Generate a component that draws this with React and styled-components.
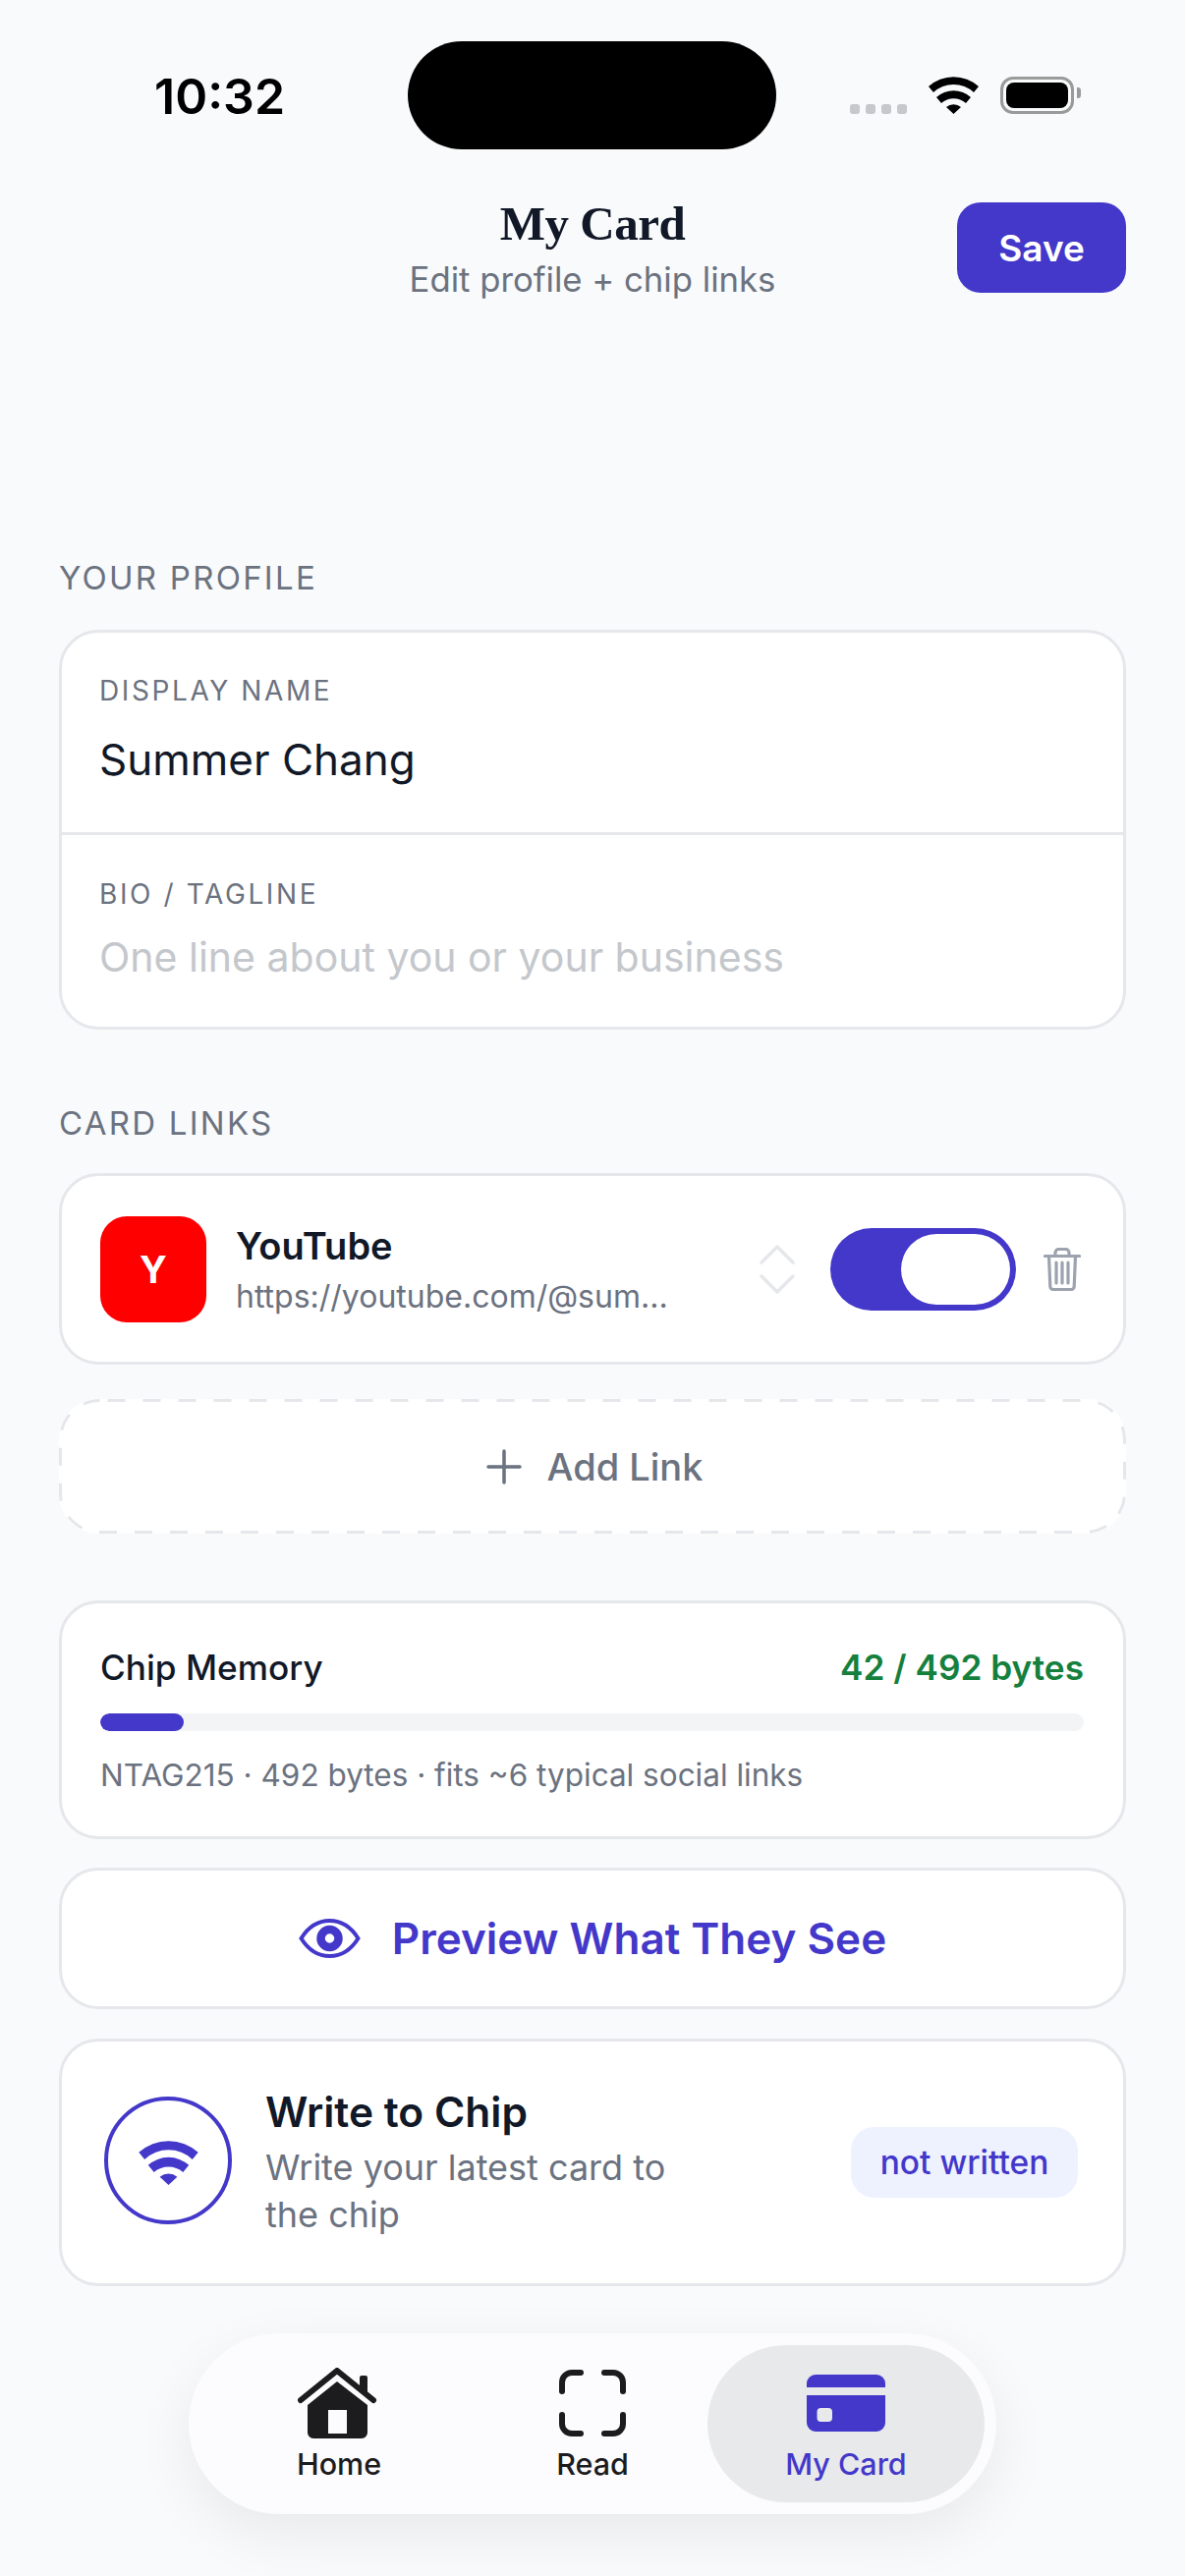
import styled, { createGlobalStyle } from "styled-components";

const PURPLE = "#4338ca";

const GlobalStyle = createGlobalStyle`
  html, body {
    margin: 0;
    padding: 0;
    background: #f9fafb;
  }
  * {
    box-sizing: border-box;
  }
`;

const WifiIcon = ({ width, height, color }) => (
  <svg width={width} height={height} viewBox="0 0 51 38" fill={color}>
    <path d="M0 10A38 38 0 0 1 51 10L46 16A30 30 0 0 0 5 16Z" />
    <path d="M8 21A26 26 0 0 1 43 21L38 27A19 19 0 0 0 13 27Z" />
    <path d="M18 31A12 12 0 0 1 33 31L25.500 38Z" />
  </svg>
);

const App = () => {
  return (
    <Page>
      <GlobalStyle />
      <StatusBar>
        <Time>10:32</Time>
        <Island />
        <StatusIcons>
          <Dots>
            <i />
            <i />
            <i />
            <i />
          </Dots>
          <WifiIcon width={51} height={38} color="#000" />
          <Battery>
            <span />
          </Battery>
        </StatusIcons>
      </StatusBar>

      <Header>
        <HeaderTitle>
          <h1>My Card</h1>
          <p>Edit profile + chip links</p>
        </HeaderTitle>
        <SaveButton>Save</SaveButton>
      </Header>

      <Content>
        <SectionLabel>YOUR PROFILE</SectionLabel>
        <Card>
          <Field>
            <FieldLabel>DISPLAY NAME</FieldLabel>
            <FieldValue>Summer Chang</FieldValue>
          </Field>
          <Field $bio>
            <FieldLabel>BIO / TAGLINE</FieldLabel>
            <FieldValue $placeholder>One line about you or your business</FieldValue>
          </Field>
        </Card>

        <SectionLabel $links>CARD LINKS</SectionLabel>
        <LinkRow>
          <LinkBadge>Y</LinkBadge>
          <LinkText>
            <strong>YouTube</strong>
            <span>https://youtube.com/@sum...</span>
          </LinkText>
          <svg width="36" height="50" viewBox="0 0 36 50" fill="none" stroke="#e5e7eb" strokeWidth="3.500" strokeLinecap="round" strokeLinejoin="round">
            <path d="M2 18 18 2l16 16M2 32l16 16 16-16" />
          </svg>
          <Toggle>
            <span />
          </Toggle>
          <svg width="38" height="44" viewBox="0 0 38 44" fill="none" stroke="#9ca3af" strokeWidth="3.200" strokeLinecap="round" strokeLinejoin="round">
            <path d="M1.500 8.500h35M12 8.500V5a3.500 3.500 0 0 1 3.500-3.500h7A3.500 3.500 0 0 1 26 5v3.500M5.500 8.500l1.300 31a3 3 0 0 0 3 3h18.400a3 3 0 0 0 3-3l1.300-31M13 15v21M19 15v21M25 15v21" />
          </svg>
        </LinkRow>

        <AddLink>
          <DashOutline width="1086" height="137" viewBox="0 0 1086 137" fill="none">
            <rect x="1.500" y="1.500" width="1083" height="134" rx="40" stroke="#e5e7eb" strokeWidth="3" strokeDasharray="18 18" strokeDashoffset="-8" />
          </DashOutline>
          <svg width="36" height="36" viewBox="0 0 36 36" stroke="#6b7280" strokeWidth="3.500" strokeLinecap="round">
            <path d="M18 2v32M2 18h32" />
          </svg>
          Add Link
        </AddLink>

        <MemoryCard>
          <MemoryHead>
            <span>Chip Memory</span>
            <b>42 / 492 bytes</b>
          </MemoryHead>
          <MemoryTrack>
            <MemoryFill style={{ width: `${(42 / 492) * 100}%` }} />
          </MemoryTrack>
          <MemoryNote>NTAG215 · 492 bytes · fits ~6 typical social links</MemoryNote>
        </MemoryCard>

        <PreviewButton>
          <svg width="63" height="40" viewBox="0 0 63 40" fill="none" stroke={PURPLE}>
            <path d="M2.500 20C10 8 20 2 31.500 2S53 8 60.500 20C53 32 43 38 31.500 38S10 32 2.500 20z" strokeWidth="4" />
            <circle cx="31.500" cy="20" r="9" strokeWidth="8.500" />
          </svg>
          Preview What They See
        </PreviewButton>

        <WriteCard>
          <WriteIcon>
            <WifiIcon width={61} height={45} color={PURPLE} />
          </WriteIcon>
          <WriteText>
            <strong>Write to Chip</strong>
            <span>Write your latest card to the chip</span>
          </WriteText>
          <WriteBadge>not written</WriteBadge>
        </WriteCard>
      </Content>

      <TabBar>
        <Tab>
          <TabIcon>
            <svg width="85" height="72" viewBox="0 0 85 72" fill="#1c1c1e">
              <path d="M3 33 40 3l37 30" fill="none" stroke="#1c1c1e" strokeWidth="6" strokeLinecap="round" strokeLinejoin="round" />
              <path d="M63 10a2 2 0 0 1 2-2h4a2 2 0 0 1 2 2v16l-8-7z" />
              <path fillRule="evenodd" d="M40 14 71 38v28a6 6 0 0 1-6 6H16a6 6 0 0 1-6-6V38zM31 43v24h19V43z" />
            </svg>
          </TabIcon>
          <TabLabel>Home</TabLabel>
        </Tab>
        <Tab $grow>
          <TabIcon>
            <svg width="68" height="68" viewBox="0 0 68 68" fill="none" stroke="#1c1c1e" strokeWidth="6" strokeLinecap="round">
              <path d="M3 22V13A10 10 0 0 1 13 3h9M46 3h9a10 10 0 0 1 10 10v9M3 46v9a10 10 0 0 0 10 10h9M65 46v9a10 10 0 0 1-10 10h-9" />
            </svg>
          </TabIcon>
          <TabLabel>Read</TabLabel>
        </Tab>
        <Tab $active>
          <TabIcon>
            <svg width="80" height="58" viewBox="0 0 80 58" fill={PURPLE}>
              <path d="M9 0h62a9 9 0 0 1 9 9v4H0V9a9 9 0 0 1 9-9z" />
              <path fillRule="evenodd" d="M0 21h80v28a9 9 0 0 1-9 9H9a9 9 0 0 1-9-9zM14.500 34a4 4 0 0 0-4 4v6a4 4 0 0 0 4 4H22a4 4 0 0 0 4-4v-6a4 4 0 0 0-4-4z" />
            </svg>
          </TabIcon>
          <TabLabel $active>My Card</TabLabel>
        </Tab>
      </TabBar>
    </Page>
  );
};

const Page = styled.div`
  position: relative;
  width: 1206px;
  height: 2622px;
  overflow: hidden;
  background: #f9fafb;
  font-family: "Inter", "Liberation Sans", sans-serif;
`;

const StatusBar = styled.div`
  display: flex;
  align-items: flex-start;
  height: 152px;
  padding: 42px 0 0 157px;
`;

const Time = styled.div`
  width: 258px;
  margin-top: 28px;
  font-size: 50px;
  line-height: 56px;
  font-weight: 600;
  color: #000;
`;

const Island = styled.div`
  width: 375px;
  height: 110px;
  border-radius: 55px;
  background: #000;
`;

const StatusIcons = styled.div`
  display: flex;
  align-items: flex-end;
  gap: 22px;
  margin: 36px 0 0 75px;
`;

const Dots = styled.div`
  display: flex;
  gap: 6px;
  i {
    width: 10px;
    height: 10px;
    border-radius: 3px;
    background: #c7c7cc;
  }
`;

const Battery = styled.div`
  position: relative;
  width: 75px;
  height: 38px;
  padding: 3px;
  border: 3px solid #9a9a9a;
  border-radius: 13px;
  span {
    display: block;
    height: 100%;
    border-radius: 8px;
    background: #000;
  }
  &::after {
    content: "";
    position: absolute;
    right: -10px;
    top: 8px;
    width: 4px;
    height: 11px;
    border-radius: 0 3px 3px 0;
    background: #9a9a9a;
  }
`;

const Header = styled.div`
  position: relative;
  display: flex;
  justify-content: center;
  padding-top: 46px;
`;

const HeaderTitle = styled.div`
  text-align: center;
  h1 {
    margin: 0;
    font-family: "Liberation Serif", serif;
    font-weight: 700;
    font-size: 49px;
    line-height: 60px;
    letter-spacing: -0.5px;
    color: #111827;
  }
  p {
    margin: 4px 0 0;
    font-size: 34.700px;
    line-height: 44px;
    color: #6b7280;
  }
`;

const SaveButton = styled.button`
  position: absolute;
  right: 60px;
  top: 54px;
  width: 172px;
  height: 92px;
  border: 0;
  border-radius: 24px;
  background: ${PURPLE};
  color: #fff;
  font: 600 37px "Inter", sans-serif;
`;

const Content = styled.div`
  padding: 260px 60px 0;
`;

const SectionLabel = styled.div`
  margin: ${(p) => (p.$links ? "73px 0 29px" : "0 0 31px")};
  font-size: 33px;
  line-height: 44px;
  font-weight: 400;
  letter-spacing: 2.250px;
  color: #6b7280;
`;

const Card = styled.div`
  background: #fff;
  border: 3px solid #e5e7eb;
  border-radius: 40px;
`;

const Field = styled.div`
  height: ${(p) => (p.$bio ? "198px" : "203px")};
  padding: ${(p) => (p.$bio ? "42px" : "41px")} 38px 0;
  border-top: ${(p) => (p.$bio ? "3px solid #e5e7eb" : "0")};
`;

const FieldLabel = styled.div`
  font-size: 28px;
  line-height: 36px;
  font-weight: 400;
  letter-spacing: 2.600px;
  color: #6b7280;
`;

const FieldValue = styled.div`
  margin-top: ${(p) => (p.$placeholder ? "18px" : "24px")};
  font-size: ${(p) => (p.$placeholder ? "41px" : "44px")};
  line-height: 56px;
  color: ${(p) => (p.$placeholder ? "#c4c7cc" : "#111827")};
`;

const LinkRow = styled.div`
  display: flex;
  align-items: center;
  height: 195px;
  padding: 0 43px 0 39px;
  background: #fff;
  border: 3px solid #e5e7eb;
  border-radius: 40px;
`;

const LinkBadge = styled.div`
  flex: none;
  display: flex;
  align-items: center;
  justify-content: center;
  width: 108px;
  height: 108px;
  border-radius: 27px;
  background: #ff0000;
  color: #fff;
  font-size: 38px;
  font-weight: 700;
`;

const LinkText = styled.div`
  flex: 1;
  display: flex;
  flex-direction: column;
  margin-left: 30px;
  strong {
    margin-top: 2px;
    font-size: 38px;
    line-height: 46px;
    font-weight: 600;
    color: #111827;
  }
  span {
    margin-top: 9px;
    font-size: 32px;
    line-height: 40px;
    color: #6b7280;
  }
`;

const Toggle = styled.div`
  display: flex;
  justify-content: flex-end;
  align-items: center;
  width: 189px;
  height: 84px;
  margin: 0 28px 0 36px;
  padding: 6px;
  border-radius: 42px;
  background: ${PURPLE};
  span {
    width: 111px;
    height: 72px;
    border-radius: 36px;
    background: #fff;
  }
`;

const AddLink = styled.div`
  position: relative;
  display: flex;
  align-items: center;
  justify-content: center;
  gap: 26px;
  height: 137px;
  margin-top: 35px;
  padding-left: 4px;
  background: #fff;
  border-radius: 40px;
  font-size: 38px;
  font-weight: 500;
  color: #6b7280;
`;

const DashOutline = styled.svg`
  position: absolute;
  left: 0;
  top: 0;
`;

const MemoryCard = styled.div`
  height: 243px;
  margin-top: 68px;
  padding: 43px 40px 0 39px;
  background: #fff;
  border: 3px solid #e5e7eb;
  border-radius: 40px;
`;

const MemoryHead = styled.div`
  display: flex;
  justify-content: space-between;
  font-size: 35.200px;
  line-height: 44px;
  font-weight: 500;
  color: #111827;
  b {
    font-weight: 600;
    color: #15803d;
  }
`;

const MemoryTrack = styled.div`
  height: 18px;
  margin-top: 25px;
  border-radius: 9px;
  background: #f3f4f6;
  overflow: hidden;
`;

const MemoryFill = styled.div`
  height: 100%;
  border-radius: 9px;
  background: ${PURPLE};
`;

const MemoryNote = styled.div`
  margin-top: 25px;
  font-size: 31.500px;
  line-height: 40px;
  color: #6b7280;
`;

const PreviewButton = styled.div`
  display: flex;
  align-items: center;
  justify-content: center;
  gap: 32px;
  height: 144px;
  margin-top: 29px;
  background: #fff;
  border: 3px solid #e5e7eb;
  border-radius: 40px;
  font-size: 44px;
  font-weight: 600;
  color: ${PURPLE};
`;

const WriteCard = styled.div`
  display: flex;
  align-items: center;
  height: 252px;
  margin-top: 30px;
  padding: 0 46px 0 43px;
  background: #fff;
  border: 3px solid #e5e7eb;
  border-radius: 40px;
`;

const WriteIcon = styled.div`
  flex: none;
  display: flex;
  align-items: center;
  justify-content: center;
  width: 130px;
  height: 130px;
  margin-top: -4px;
  padding-top: 4px;
  border: 4px solid ${PURPLE};
  border-radius: 50%;
`;

const WriteText = styled.div`
  flex: 1;
  display: flex;
  flex-direction: column;
  margin-left: 34px;
  strong {
    font-size: 42.500px;
    line-height: 52px;
    font-weight: 600;
    color: #111827;
  }
  span {
    width: 440px;
    margin-top: 6px;
    font-size: 36px;
    line-height: 48px;
    color: #6b7280;
  }
`;

const WriteBadge = styled.div`
  display: flex;
  align-items: center;
  justify-content: center;
  width: 231px;
  height: 72px;
  border-radius: 24px;
  background: #eef2ff;
  color: ${PURPLE};
  font-size: 33.500px;
  font-weight: 500;
`;

const TabBar = styled.div`
  position: absolute;
  left: 192px;
  top: 2375px;
  display: flex;
  align-items: stretch;
  width: 822px;
  height: 184px;
  padding: 12px;
  border-radius: 92px;
  background: #fcfcfe;
  box-shadow: 0 20px 60px rgba(0, 0, 0, 0.07);
`;

const Tab = styled.div`
  display: flex;
  flex-direction: column;
  align-items: center;
  gap: 7px;
  flex: ${(p) => (p.$grow ? "1" : "0 0 282px")};
  padding-top: 22px;
  border-radius: 80px;
  background: ${(p) => (p.$active ? "#e8e9eb" : "transparent")};
`;

const TabIcon = styled.div`
  display: flex;
  align-items: center;
  justify-content: center;
  height: 74px;
`;

const TabLabel = styled.div`
  font-size: 30.500px;
  line-height: 36px;
  font-weight: 500;
  color: ${(p) => (p.$active ? PURPLE : "#1c1c1e")};
`;

export default App;
